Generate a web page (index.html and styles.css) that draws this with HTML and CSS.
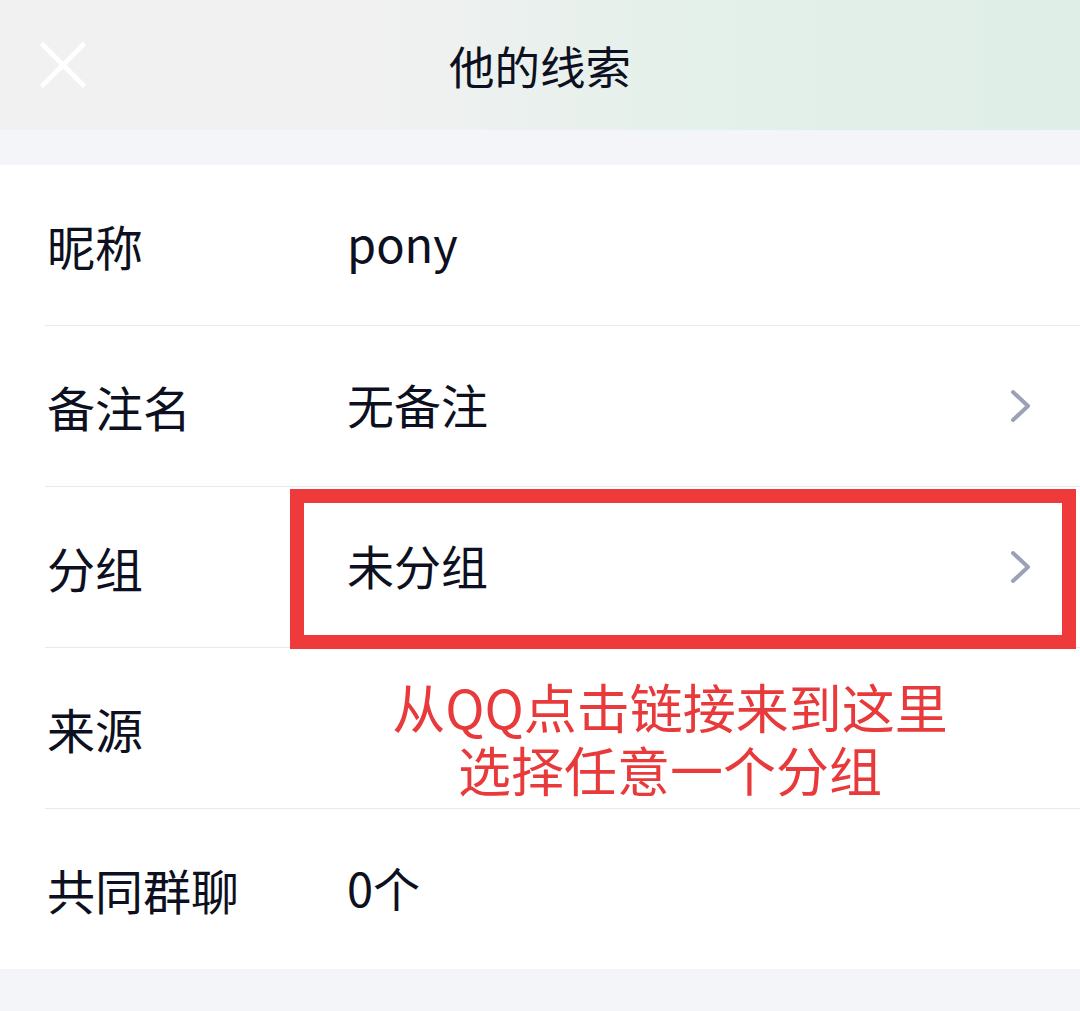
FILE: index.html
```html
<!DOCTYPE html>
<html lang="zh-CN">
<head>
  <meta charset="UTF-8">
  <meta name="viewport" content="width=device-width, initial-scale=1.0">
  <title>他的线索</title>
  <link rel="stylesheet" href="styles.css">
</head>
<body>
  <div class="header">
    <div class="close">
      <svg width="50" height="50" viewBox="0 0 50 50">
        <path d="M5 5 L45 45 M45 5 L5 45" stroke="#fff" stroke-width="5" stroke-linecap="round" fill="none"/>
      </svg>
    </div>
    <div class="title">他的线索</div>
  </div>

  <div class="list">
    <div class="row">
      <div class="label">昵称</div>
      <div class="value">pony</div>
    </div>
    <div class="row">
      <div class="label">备注名</div>
      <div class="value">无备注</div>
      <svg class="chevron" width="24" height="36" viewBox="0 0 24 36">
        <path d="M4 4 L19 18 L4 32" stroke="#9ba1b6" stroke-width="4" stroke-linecap="round" stroke-linejoin="round" fill="none"/>
      </svg>
    </div>
    <div class="row">
      <div class="label">分组</div>
      <div class="value">未分组</div>
      <svg class="chevron" width="24" height="36" viewBox="0 0 24 36">
        <path d="M4 4 L19 18 L4 32" stroke="#9ba1b6" stroke-width="4" stroke-linecap="round" stroke-linejoin="round" fill="none"/>
      </svg>
    </div>
    <div class="row">
      <div class="label">来源</div>
      <div class="value"></div>
    </div>
    <div class="row last">
      <div class="label">共同群聊</div>
      <div class="value">0个</div>
    </div>

    <!-- annotation drawn over the screenshot -->
    <div class="mark"></div>
    <div class="note">
      <div class="note-line">从QQ点击链接来到这里</div>
      <div class="note-line">选择任意一个分组</div>
    </div>
  </div>

  <div class="footer"></div>
</body>
</html>
```

FILE: styles.css
```css
html, body {
  margin: 0;
  height: 100%;
  overflow: hidden;
  background-color: #f4f5f8;
  font-family: "Noto Sans CJK SC", "Noto Sans", sans-serif;
  color: #0d1020;
}

.header {
  display: flex;
  align-items: center;
  height: 130px;
  background: linear-gradient(90deg, #f1f1f1 0, #f1f1f1 108px, #f1f1f1 360px, #e4f0ea 700px, #dfeee7 1080px);
  position: relative;
}

.close {
  width: 108px;
  height: 130px;
  display: flex;
  align-items: center;
  justify-content: center;
  background-color: #f1f1f1;
}

.close svg {
  margin-left: 18px;
}

.title {
  position: absolute;
  left: 0;
  right: 0;
  text-align: center;
  font-size: 45.5px;
  line-height: 130px;
  pointer-events: none;
}

.list {
  margin-top: 35px;
  background-color: #fff;
  position: relative;
}

.row {
  display: flex;
  align-items: center;
  height: 160px;
  margin-left: 45px;
  border-bottom: 1px solid #e8e9ec;
}

.row.last {
  border-bottom: none;
}

.label {
  width: 300px;
  padding-left: 2px;
  font-size: 48px;
}

.value {
  flex: 1;
  font-size: 47px;
  margin-top: -6px;
}

.chevron {
  margin-right: 47px;
}

.mark {
  position: absolute;
  left: 290px;
  top: 324px;
  width: 758px;
  height: 132px;
  border: 14px solid #ee3a3b;
}

.note {
  position: absolute;
  left: 380px;
  top: 510px;
  width: 580px;
  text-align: center;
  color: #e8393b;
  font-size: 53px;
}

.note-line {
  height: 63px;
  line-height: 63px;
}

.footer {
  height: 41px;
}
```
